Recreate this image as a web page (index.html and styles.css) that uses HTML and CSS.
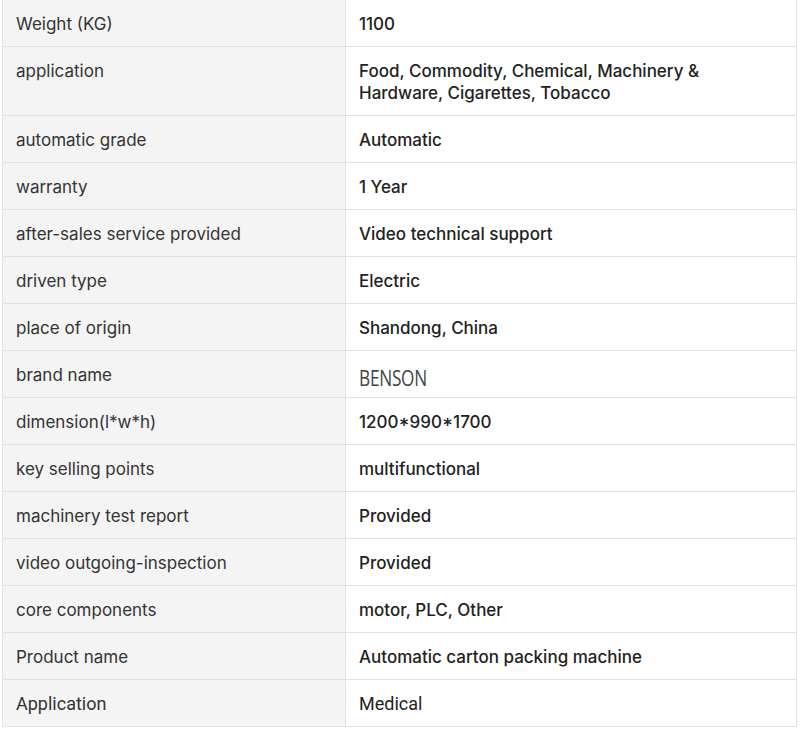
FILE: index.html
```html
<!DOCTYPE html>
<html>
<head>
<meta charset="utf-8">
<link rel="stylesheet" href="styles.css">
</head>
<body>
<table class="spec">
  <colgroup><col class="c-key"><col class="c-val"></colgroup>
  <tr><td class="k">Weight (KG)</td><td class="v">1100</td></tr>
  <tr><td class="k">application</td><td class="v">Food, Commodity, Chemical, Machinery &amp;<br>Hardware, Cigarettes, Tobacco</td></tr>
  <tr><td class="k">automatic grade</td><td class="v">Automatic</td></tr>
  <tr><td class="k">warranty</td><td class="v">1 Year</td></tr>
  <tr><td class="k">after-sales service provided</td><td class="v">Video technical support</td></tr>
  <tr><td class="k">driven type</td><td class="v">Electric</td></tr>
  <tr><td class="k">place of origin</td><td class="v">Shandong, China</td></tr>
  <tr><td class="k">brand name</td><td class="v"><span class="brand">BENSON</span></td></tr>
  <tr><td class="k">dimension(l*w*h)</td><td class="v">1200*990*1700</td></tr>
  <tr><td class="k">key selling points</td><td class="v">multifunctional</td></tr>
  <tr><td class="k">machinery test report</td><td class="v">Provided</td></tr>
  <tr><td class="k">video outgoing-inspection</td><td class="v">Provided</td></tr>
  <tr><td class="k">core components</td><td class="v">motor, PLC, Other</td></tr>
  <tr><td class="k">Product name</td><td class="v">Automatic carton packing machine</td></tr>
  <tr class="alt"><td class="k">Application</td><td class="v">Medical</td></tr>
</table>
</body>
</html>
```

FILE: styles.css
```css
html, body {
  margin: 0;
  padding: 0;
  background: #fff;
}
.spec {
  border-collapse: collapse;
  table-layout: fixed;
  width: 795px;
  margin: -1px 0 0 2px;
  font-family: Inter, "Noto Sans", sans-serif;
  font-size: 17px;
  line-height: 22px;
}
.c-key { width: 343px; }
.spec td {
  border: 1px solid #e2e2e2;
  padding: 13px 13px 11px 13px;
  vertical-align: top;
}
.spec .k {
  background: #f4f4f4;
  color: #333;
  font-weight: 400;
}
.spec .v {
  background: #fff;
  color: #222;
  font-weight: 500;
}
.spec .brand {
  display: inline-block;
  font-family: "Open Sans", sans-serif;
  font-weight: 400;
  font-size: 21px;
  line-height: 0;
  letter-spacing: -0.3px;
  color: #444;
  transform: scaleX(0.82);
  transform-origin: left center;
  position: relative;
  top: 5px;
}
.spec .alt td {
  font-family: Roboto, sans-serif;
  font-weight: 400;
  font-size: 18px;
  color: #333;
}
.spec .alt .v { color: #222; }
```
